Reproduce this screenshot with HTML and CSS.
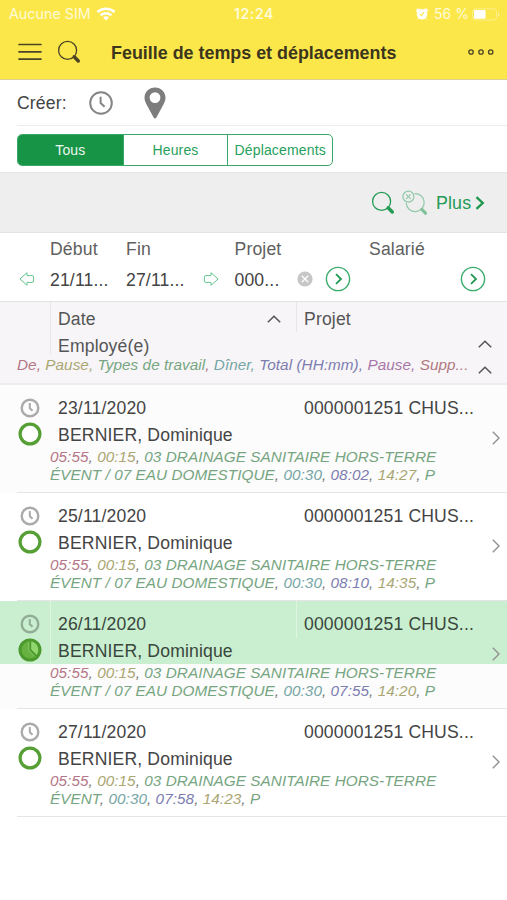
FILE: index.html
```html
<!DOCTYPE html>
<html lang="fr">
<head>
    <meta charset="UTF-8">
    <title>Feuille de temps et déplacements</title>
    <link rel="stylesheet" href="styles.css">
</head>
<body>
    <svg width="0" height="0" class="defs">
        <symbol id="clock" viewBox="0 0 24 24">
            <circle cx="12" cy="12" r="10.8" fill="none" stroke="currentColor" stroke-width="2"/>
            <path d="M11.6 5.8V12l4 3.8" fill="none" stroke="currentColor" stroke-width="2"/>
        </symbol>
        <symbol id="small-clock" viewBox="0 0 20 20">
            <circle cx="10" cy="10" r="8.3" fill="none" stroke="currentColor" stroke-width="2.4"/>
            <path d="M9.8 5v5.2l2.8 2.6" fill="none" stroke="currentColor" stroke-width="2"/>
        </symbol>
        <symbol id="search" viewBox="0 0 24 24">
            <circle cx="10.6" cy="10.4" r="9" fill="none" stroke="currentColor" stroke-width="1.3"/>
            <path d="M16 15.6l1.8 1.8" stroke="currentColor" stroke-width="1.5"/>
            <path d="M17.4 17l3.9 4" stroke="currentColor" stroke-width="3.4" stroke-linecap="round"/>
        </symbol>
        <symbol id="ring" viewBox="0 0 24 24">
            <circle cx="12" cy="12" r="9.9" fill="#fff" stroke="#559f35" stroke-width="3.2"/>
        </symbol>
        <symbol id="up" viewBox="0 0 14 8">
            <path d="M.8 7.2L7 1.2l6.2 6" fill="none" stroke="#555" stroke-width="1.5"/>
        </symbol>
        <symbol id="next" viewBox="0 0 8 14">
            <path d="M.8 .8L7 7 .8 13.2" fill="none" stroke="currentColor" stroke-width="1.4"/>
        </symbol>
        <symbol id="go" viewBox="0 0 26 26">
            <circle cx="13" cy="13" r="11.6" fill="none" stroke="#3aac6c" stroke-width="1.4"/>
            <path d="M11 8.2l5 4.8-5 4.8" fill="none" stroke="#229954" stroke-width="1.8"/>
        </symbol>
        <symbol id="arrow" viewBox="0 0 16 14">
            <path d="M.9 7L8 .7V3.600h5.200q1.400 0 1.400 1.400v4q0 1.400-1.400 1.400H8v2.900z" fill="none" stroke="#62c590" stroke-width="1"/>
        </symbol>
    </svg>

    <header>
        <div class="status">
            <span class="carrier">Aucune SIM</span>
            <svg class="wifi" width="20" height="14" viewBox="0 0 20 14">
                <path d="M1.4 5.2a12.5 12.5 0 0 1 17.2 0M4.6 8.4a8 8 0 0 1 10.8 0" fill="none" stroke="#fff" stroke-width="2.4"/>
                <path d="M10 13.6l-3-3a4.4 4.4 0 0 1 6 0z" fill="#fff"/>
            </svg>
            <span class="time">12:24</span>
            <svg class="alarm" width="12" height="12" viewBox="0 0 12 12">
                <circle cx="6" cy="6.3" r="5.2" fill="#fff"/>
                <path d="M.9 4V1.200h3zM11.100 4V1.200h-3zM1.200 11.500l2-2M10.800 11.500l-2-2" fill="#fff" stroke="#fff"/>
                <path d="M4 6.200l1.600 1.300L8 4.200" fill="none" stroke="#fce74b" stroke-width="1.2"/>
            </svg>
            <span class="percent">56 %</span>
            <svg class="battery" width="28" height="13" viewBox="0 0 28 13">
                <rect x=".5" y=".8" width="24" height="11.2" rx="3" fill="none" stroke="#fff" stroke-opacity=".35"/>
                <rect x="2" y="2" width="11.6" height="8.8" rx="1" fill="#fff"/>
                <path d="M26 4.5v4q1.4-.6 1.4-2t-1.4-2z" fill="#fff" fill-opacity=".45"/>
            </svg>
        </div>
        <div class="nav">
            <svg class="menu" width="24" height="18" viewBox="0 0 24 18">
                <path d="M1 1.500h22M1 8.800h22M1 16.100h22" stroke="#4b4425" stroke-width="1.7" stroke-linecap="round"/>
            </svg>
            <svg class="search" width="24" height="24"><use href="#search"/></svg>
            <h1>Feuille de temps et déplacements</h1>
            <svg class="dots" width="26" height="8" viewBox="0 0 26 8">
                <g fill="none" stroke="#4b4425" stroke-width="1.3">
                    <circle cx="3" cy="4" r="2.2"/>
                    <circle cx="13" cy="4" r="2.2"/>
                    <circle cx="22.7" cy="4" r="2.2"/>
                </g>
            </svg>
        </div>
    </header>

    <div class="create">
        <span>Créer:</span>
        <svg class="clock" width="24" height="24"><use href="#clock"/></svg>
        <svg class="pin" width="22" height="32" viewBox="0 0 22 32">
            <path fill-rule="evenodd" fill="#7d7d7d" d="M11 .5C5 .5 .5 5 .5 10.8c0 3 1.3 5.4 2.6 7.7L9.6 30.6q1.4 1.8 2.8 0l6.500-12.100c1.300-2.300 2.600-4.700 2.600-7.700C21.500 5 17 .5 11 .5zM11 5.200a5.400 5.400 0 1 1 0 10.800a5.400 5.400 0 1 1 0-10.800z"/>
        </svg>
    </div>

    <div class="tabs">
        <div class="segment">
            <span class="active">Tous</span>
            <span>Heures</span>
            <span>Déplacements</span>
        </div>
    </div>

    <div class="toolbar">
        <svg class="find" width="24" height="24"><use href="#search"/></svg>
        <svg class="clear" width="26" height="26" viewBox="0 0 26 26">
            <g fill="none" stroke="#90c9a9" stroke-width="1.2">
                <path d="M12.500 3.600a9 9 0 1 1-8.300 9.300"/>
                <circle cx="6.400" cy="6.600" r="5.500"/>
                <path d="M4.200 4.400l4.400 4.400M8.600 4.400l-4.400 4.400"/>
            </g>
            <path d="M19.800 19.400l3.700 3.800" stroke="#80c29c" stroke-width="3.200" stroke-linecap="round"/>
        </svg>
        <span>Plus</span>
        <svg class="more" width="10" height="14" viewBox="0 0 10 14">
            <path d="M1.500 1.200L7.700 7l-6.200 5.800" fill="none" stroke="#1c974c" stroke-width="2.300"/>
        </svg>
    </div>

    <div class="filters">
        <svg class="prev" width="16" height="14"><use href="#arrow"/></svg>
        <div class="field start"><label>Début</label><span>21/11...</span></div>
        <div class="field end"><label>Fin</label><span>27/11...</span></div>
        <svg class="following" width="16" height="14"><use href="#arrow"/></svg>
        <div class="field project"><label>Projet</label><span>000...</span></div>
        <svg class="reset" width="16" height="16" viewBox="0 0 16 16">
            <circle cx="8" cy="8" r="7.600" fill="#c6c6c6"/>
            <path d="M4.800 4.800l6.400 6.400M11.200 4.800l-6.400 6.400" stroke="#fff" stroke-width="1.300"/>
        </svg>
        <svg class="go" width="26" height="26"><use href="#go"/></svg>
        <div class="field employee"><label>Salarié</label></div>
        <svg class="go" width="26" height="26"><use href="#go"/></svg>
    </div>

    <div class="head">
        <div class="cell date"><span>Date</span><svg width="14" height="8"><use href="#up"/></svg></div>
        <div class="cell proj">Projet</div>
        <div class="cell name"><span>Employé(e)</span><svg width="14" height="8"><use href="#up"/></svg></div>
        <div class="legend">
            <span><i class="c1">De,</i> <i class="c2">Pause,</i> <i class="c3">Types de travail</i><i class="c1">,</i> <i class="c4">Dîner,</i> <i class="c5">Total (HH:mm),</i> <i class="c6">Pause,</i> <i class="c7">Supp...</i></span>
            <svg width="14" height="8"><use href="#up"/></svg>
        </div>
    </div>

    <div class="row shade">
        <div class="top">
            <div class="icons">
                <svg class="type" width="20" height="20"><use href="#small-clock"/></svg>
                <svg width="24" height="24"><use href="#ring"/></svg>
            </div>
            <div class="cell">23/11/2020</div>
            <div class="cell proj">0000001251 CHUS...</div>
            <div class="cell name">BERNIER, Dominique</div>
            <svg class="next" width="8" height="14"><use href="#next"/></svg>
        </div>
        <div class="details"><i class="c1">05:55</i>, <i class="c2">00:15</i>, <i class="c3">03 DRAINAGE SANITAIRE HORS-TERRE<br>ÉVENT / 07 EAU DOMESTIQUE</i>, <i class="c4">00:30</i>, <i class="c5">08:02</i>, <i class="c2">14:27</i>, <i class="c3">P</i></div>
    </div>

    <div class="row">
        <div class="top">
            <div class="icons">
                <svg class="type" width="20" height="20"><use href="#small-clock"/></svg>
                <svg width="24" height="24"><use href="#ring"/></svg>
            </div>
            <div class="cell">25/11/2020</div>
            <div class="cell proj">0000001251 CHUS...</div>
            <div class="cell name">BERNIER, Dominique</div>
            <svg class="next" width="8" height="14"><use href="#next"/></svg>
        </div>
        <div class="details"><i class="c1">05:55</i>, <i class="c2">00:15</i>, <i class="c3">03 DRAINAGE SANITAIRE HORS-TERRE<br>ÉVENT / 07 EAU DOMESTIQUE</i>, <i class="c4">00:30</i>, <i class="c5">08:10</i>, <i class="c2">14:35</i>, <i class="c3">P</i></div>
    </div>

    <div class="row shade selected">
        <div class="top">
            <div class="icons">
                <svg class="type" width="20" height="20"><use href="#small-clock"/></svg>
                <svg width="24" height="24" viewBox="0 0 24 24">
                    <circle cx="12" cy="12" r="10" fill="#66b140" stroke="#4c9a2d" stroke-width="3"/>
                    <path d="M13 3.500V11.500l5.500 5.500A8.500 8.500 0 0 0 13 3.500z" fill="#91d66e"/>
                    <path d="M11 3.500V12.500l6 6" fill="none" stroke="#a6dc8a" stroke-width=".8"/>
                    <path d="M12.300 2.500V12l6 6" fill="none" stroke="#4c9a2d" stroke-width="1.800"/>
                </svg>
            </div>
            <div class="cell">26/11/2020</div>
            <div class="cell proj">0000001251 CHUS...</div>
            <div class="cell name">BERNIER, Dominique</div>
            <svg class="next" width="8" height="14"><use href="#next"/></svg>
        </div>
        <div class="details"><i class="c1">05:55</i>, <i class="c2">00:15</i>, <i class="c3">03 DRAINAGE SANITAIRE HORS-TERRE<br>ÉVENT / 07 EAU DOMESTIQUE</i>, <i class="c4">00:30</i>, <i class="c5">07:55</i>, <i class="c2">14:20</i>, <i class="c3">P</i></div>
    </div>

    <div class="row">
        <div class="top">
            <div class="icons">
                <svg class="type" width="20" height="20"><use href="#small-clock"/></svg>
                <svg width="24" height="24"><use href="#ring"/></svg>
            </div>
            <div class="cell">27/11/2020</div>
            <div class="cell proj">0000001251 CHUS...</div>
            <div class="cell name">BERNIER, Dominique</div>
            <svg class="next" width="8" height="14"><use href="#next"/></svg>
        </div>
        <div class="details"><i class="c1">05:55</i>, <i class="c2">00:15</i>, <i class="c3">03 DRAINAGE SANITAIRE HORS-TERRE<br>ÉVENT</i>, <i class="c4">00:30</i>, <i class="c5">07:58</i>, <i class="c2">14:23</i>, <i class="c3">P</i></div>
    </div>
</body>
</html>
```
FILE: styles.css
```css
* {
    box-sizing: border-box;
}
body {
    margin: 0;
    background: #fff;
    color: #444;
    font-family: "Liberation Sans", Arial, sans-serif;
    font-size: 17.6px;
    letter-spacing: 0.15px;
    overflow: hidden;
}
svg {
    display: block;
    flex: none;
}
.defs {
    position: absolute;
}
header {
    height: 80px;
    background: #fce74b;
    border-bottom: 1px solid #ded291;
}
.status {
    display: flex;
    align-items: center;
    height: 28px;
    padding-left: 9px;
    color: #fffbd8;
    font: 15px/28px Inter, sans-serif;
    letter-spacing: 0;
    white-space: nowrap;
}
.carrier {
    width: 87px;
    font-size: 14.3px;
}
.wifi {
    margin-right: 118px;
}
.time {
    width: 182px;
    font-size: 14px;
    font-weight: 600;
    letter-spacing: 0.6px;
}
.percent {
    width: 38px;
    margin-left: 6px;
    font-size: 14px;
}
.nav {
    display: flex;
    align-items: center;
    height: 48px;
    padding-left: 18px;
    color: #4b4425;
}
.nav .search {
    margin-left: 15px;
}
h1 {
    width: 357px;
    margin: 1px 0 0 30px;
    color: #3b351c;
    font-size: 17.9px;
    letter-spacing: 0;
    line-height: 48px;
    white-space: nowrap;
}
.create {
    display: flex;
    align-items: center;
    height: 46px;
    margin-left: 17px;
    border-bottom: 1px solid #ececec;
}
.create span {
    width: 72px;
    padding-top: 1px;
}
.clock {
    color: #858585;
}
.pin {
    margin-left: 31px;
}
.tabs {
    height: 46px;
    padding: 8px 0 0 17px;
}
.segment {
    display: flex;
    width: 316px;
    height: 32px;
    border: 1px solid #3aa868;
    border-radius: 5px;
    overflow: hidden;
    color: #27a05b;
    font-size: 14px;
    line-height: 30px;
    text-align: center;
}
.segment span {
    width: 105px;
    border-left: 1px solid #3aa868;
    white-space: nowrap;
}
.segment .active {
    border: 0;
    background: #189447;
    color: #eaf8ef;
}
.toolbar {
    display: flex;
    align-items: center;
    height: 61px;
    padding-left: 371px;
    background: #eee;
    border-top: 1px solid #e6e6e6;
    border-bottom: 1px solid #e3e3e3;
    color: #239b54;
}
.clear {
    margin-left: 7px;
}
.toolbar span {
    width: 39px;
    margin-left: 8px;
    padding-top: 1px;
    font-size: 17.8px;
}
.filters {
    display: flex;
    height: 69px;
    padding-left: 19px;
    border-bottom: 1px solid #e3e1e3;
}
.field label,
.field span {
    display: block;
    height: 31px;
    line-height: 32px;
    color: #606060;
    white-space: nowrap;
}
.field span {
    color: #444;
}
.prev,
.following {
    margin-top: 39px;
}
.following {
    transform: scaleX(-1);
}
.start {
    width: 76px;
    margin-left: 15px;
}
.end {
    width: 77px;
}
.project {
    width: 62px;
    margin-left: 15.5px;
}
.reset {
    margin: 38px 12px 0 0;
}
.go {
    margin-top: 33px;
}
.employee {
    width: 91px;
    margin-left: 18.5px;
}
.head {
    display: grid;
    grid-template-columns: 246px 1fr;
    grid-template-rows: 30px 22px 31px;
    height: 83px;
    padding-left: 50px;
    background: #f7f5f7;
    border-bottom: 2px solid #eeecee;
    color: #555;
}
.head .cell {
    display: flex;
    align-items: center;
    justify-content: space-between;
    padding: 4px 15px 0 7px;
    border-left: 1px solid #e7e5e7;
}
.head .name {
    grid-column: 1 / 3;
}
.head .name span {
    padding-top: 2px;
    line-height: 20px;
}
.head .name svg {
    margin-bottom: 2px;
}
.legend {
    display: flex;
    grid-column: 1 / 3;
    justify-content: space-between;
    height: 24px;
    margin-left: -33px;
    padding-right: 15px;
    font-size: 15.3px;
    letter-spacing: 0.05px;
    line-height: 22px;
    white-space: nowrap;
}
.legend svg {
    margin-top: 12px;
}
.row {
    height: 108px;
}
.shade {
    background: #fcfcfc;
}
.top {
    display: grid;
    grid-template-columns: 50px 246px 181px 1fr;
    grid-template-rows: 37px 26px;
}
.icons {
    grid-row: 1 / 3;
    padding: 13px 0 0 18px;
}
.type {
    margin: 0 0 4px 2px;
    color: #aaa;
}
.row .cell {
    padding: 9px 0 0 8px;
    line-height: 28px;
    white-space: nowrap;
}
.row .name {
    grid-area: 2 / 2 / 3 / 4;
    padding-top: 0;
    line-height: 26px;
}
.next {
    grid-area: 2 / 4;
    margin: 9px 0 0 15px;
    color: #929292;
}
.details {
    height: 45px;
    margin-left: 17px;
    padding-left: 33px;
    border-bottom: 1px solid #e5e5e5;
    color: #777;
    font-size: 15.3px;
    font-style: italic;
    letter-spacing: 0.05px;
    line-height: 17.5px;
    white-space: nowrap;
}
.selected .top {
    background: #caefd0;
}
.selected .cell {
    border-left: 1px solid #dff5e2;
    padding-left: 7px;
    color: #39463c;
}
.selected .type {
    color: #91ad96;
}
.c1 { color: #b57687; }
.c2 { color: #aaa674; }
.c3 { color: #76a581; }
.c4 { color: #76a5a5; }
.c5 { color: #7c7db0; }
.c6 { color: #a875a8; }
.c7 { color: #b07880; }
```
